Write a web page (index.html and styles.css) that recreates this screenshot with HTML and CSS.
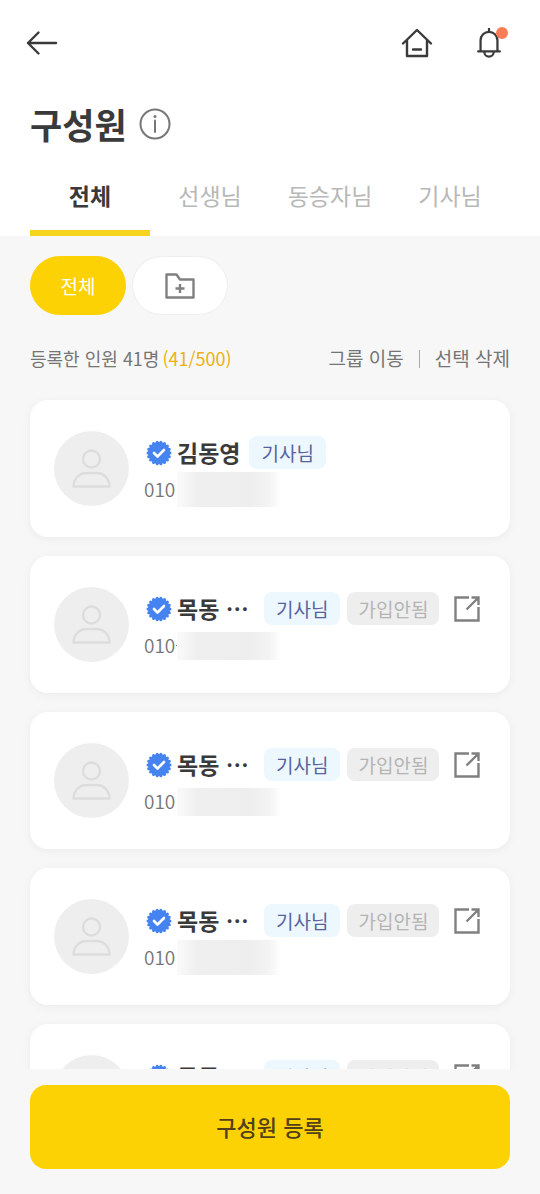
FILE: index.html
```html
<!DOCTYPE html>
<html lang="ko">
<head>
  <meta charset="UTF-8" />
  <meta name="viewport" content="width=device-width, initial-scale=1.0"/>
  <title>구성원</title>
  <link rel="stylesheet" href="styles.css">
</head>
<body>

<!-- Shared icons -->
<svg class="sprite" aria-hidden="true">
  <symbol id="icon-user" viewBox="0 0 75 75">
    <circle cx="37.500" cy="28" r="8.500" />
    <path d="M19.500 55.500c0-8 6-13.500 13-13.500h10c7 0 13 5.500 13 13.500z" />
  </symbol>
  <symbol id="icon-verified" viewBox="0 0 26 26">
    <circle cx="13" cy="13" r="11" fill="#4583f0" />
    <circle cx="13" cy="13" r="11" fill="none" stroke="#4583f0" stroke-width="3" stroke-linecap="round" stroke-dasharray="0 1" pathLength="18" />
    <path d="M8 13l3.500 3.500 6.500-6.500" fill="none" stroke="#fff" stroke-width="2.600" stroke-linecap="round" stroke-linejoin="round" />
  </symbol>
  <symbol id="icon-share" viewBox="0 0 28 28">
    <path d="M16 2.500H2.500v23h23V12M18.500 2.500h7v7.500M25.500 2.500L13.500 14.500" />
  </symbol>
</svg>

<div class="app">
  <header class="header">
    <div class="topbar">
      <button class="icon-btn" aria-label="뒤로">
        <svg width="32" height="26" viewBox="0 0 32 26"><path d="M30 13H2M12.500 2.500L2 13l10.500 10.500" /></svg>
      </button>
      <div class="topbar-right">
        <button class="icon-btn" aria-label="홈">
          <svg width="32" height="30" viewBox="0 0 32 30"><path d="M2 15.500L16 2l14 13.500M6 12v16h20V12M12 21.500h8" /></svg>
        </button>
        <button class="icon-btn bell" aria-label="알림">
          <svg width="26" height="30" viewBox="0 0 26 32"><path d="M13 1v3M4 25V13a9 9 0 0 1 18 0v12M1.500 25h23M8 25.500a5 5 0 0 0 10 0" /></svg>
          <span class="bell-dot"></span>
        </button>
      </div>
    </div>

    <div class="title-row">
      <h1>구성원</h1>
      <button class="icon-btn info" aria-label="안내">
        <svg width="32" height="32" viewBox="0 0 32 32"><circle cx="16" cy="16" r="14.500" /><path d="M16 12.500V24" /><circle class="info-dot" cx="16" cy="8.500" r="1.500" /></svg>
      </button>
    </div>

    <nav class="tabs">
      <button class="tab active">전체</button>
      <button class="tab">선생님</button>
      <button class="tab">동승자님</button>
      <button class="tab">기사님</button>
    </nav>
  </header>

  <main class="content">
    <div class="groups">
      <button class="pill active">전체</button>
      <button class="pill" aria-label="그룹 추가">
        <svg width="30" height="26" viewBox="0 0 30 26"><path d="M1.500 24.500v-23h10l3.500 5h13.500v18zM15 11v9M10.500 15.500h9" /></svg>
      </button>
    </div>

    <div class="summary">
      <p class="count">등록한 인원 41명<span>(41/500)</span></p>
      <div class="actions">
        <button>그룹 이동</button>
        <button>선택 삭제</button>
      </div>
    </div>

    <ul class="members">
      <li class="card">
        <div class="avatar"><svg><use href="#icon-user" /></svg></div>
        <div class="info-col">
          <div class="name-row">
            <svg class="verified"><use href="#icon-verified" /></svg>
            <strong class="name">김동영</strong>
            <span class="badge driver">기사님</span>
          </div>
          <div class="phone"><span class="number">010</span><span class="mask mask-tall"></span></div>
        </div>
      </li>
      <li class="card">
        <div class="avatar"><svg><use href="#icon-user" /></svg></div>
        <div class="info-col">
          <div class="name-row">
            <svg class="verified"><use href="#icon-verified" /></svg>
            <strong class="name cut">목동 …</strong>
            <span class="badge driver">기사님</span>
            <span class="badge pending">가입안됨</span>
            <button class="icon-btn share" aria-label="초대 보내기"><svg><use href="#icon-share" /></svg></button>
          </div>
          <div class="phone"><span class="number">010-</span><span class="mask"></span></div>
        </div>
      </li>
      <li class="card">
        <div class="avatar"><svg><use href="#icon-user" /></svg></div>
        <div class="info-col">
          <div class="name-row">
            <svg class="verified"><use href="#icon-verified" /></svg>
            <strong class="name cut">목동 …</strong>
            <span class="badge driver">기사님</span>
            <span class="badge pending">가입안됨</span>
            <button class="icon-btn share" aria-label="초대 보내기"><svg><use href="#icon-share" /></svg></button>
          </div>
          <div class="phone"><span class="number">010</span><span class="mask"></span></div>
        </div>
      </li>
      <li class="card">
        <div class="avatar"><svg><use href="#icon-user" /></svg></div>
        <div class="info-col">
          <div class="name-row">
            <svg class="verified"><use href="#icon-verified" /></svg>
            <strong class="name cut">목동 …</strong>
            <span class="badge driver">기사님</span>
            <span class="badge pending">가입안됨</span>
            <button class="icon-btn share" aria-label="초대 보내기"><svg><use href="#icon-share" /></svg></button>
          </div>
          <div class="phone"><span class="number">010</span><span class="mask mask-tall"></span></div>
        </div>
      </li>
      <li class="card">
        <div class="avatar"><svg><use href="#icon-user" /></svg></div>
        <div class="info-col">
          <div class="name-row">
            <svg class="verified"><use href="#icon-verified" /></svg>
            <strong class="name cut">목동 …</strong>
            <span class="badge driver">기사님</span>
            <span class="badge pending">가입안됨</span>
            <button class="icon-btn share" aria-label="초대 보내기"><svg><use href="#icon-share" /></svg></button>
          </div>
        </div>
      </li>
    </ul>
  </main>

  <footer class="footer">
    <button class="register">구성원 등록</button>
  </footer>
</div>

</body>
</html>
```
FILE: styles.css
```css
* {
  box-sizing: border-box;
}

body {
  margin: 0;
  background: #f7f7f7;
  color: #3a3a3a;
  font-family: "Noto Sans CJK KR", sans-serif;
}

button {
  padding: 0;
  border: none;
  background: none;
  color: inherit;
  font: inherit;
  cursor: pointer;
}

svg {
  display: block;
}

.sprite {
  display: none;
}

.app {
  display: flex;
  flex-direction: column;
  height: 100vh;
}

/* Header */
.header {
  flex: none;
  background: #fff;
  padding: 0 30px;
}

.topbar {
  display: flex;
  align-items: center;
  justify-content: space-between;
  height: 86px;
  margin: 0 8px 0 -4px;
}

.topbar-right {
  display: flex;
  align-items: center;
  gap: 43px;
}

.icon-btn svg {
  fill: none;
  stroke: #3a3a3a;
  stroke-width: 2.4;
  stroke-linejoin: round;
  stroke-linecap: round;
}

.bell {
  position: relative;
}

.bell-dot {
  position: absolute;
  top: -1px;
  right: -6px;
  width: 12px;
  height: 12px;
  border-radius: 50%;
  background: #fb7d57;
}

.title-row {
  display: flex;
  align-items: center;
  gap: 12px;
  height: 76px;
}

h1 {
  margin: 0;
  font-size: 35px;
  line-height: 48px;
  font-weight: 700;
}

.info svg {
  stroke: #777;
  stroke-width: 2;
}

.info .info-dot {
  fill: #777;
  stroke: none;
}

.tabs {
  display: grid;
  grid-template-columns: repeat(4, 1fr);
}

.tab {
  height: 74px;
  padding-bottom: 2px;
  border-bottom: 6px solid transparent;
  color: #b8b8b8;
  font-size: 23px;
}

.tab.active {
  border-color: #f6d31c;
  color: #3a3a3a;
  font-weight: 700;
}

/* Member list */
.content {
  flex: 1;
  min-height: 0;
  overflow: hidden;
  padding: 20px 30px 0;
}

.groups {
  display: flex;
  gap: 6px;
}

.pill {
  display: flex;
  align-items: center;
  justify-content: center;
  width: 96px;
  height: 59px;
  border: 1px solid #eee;
  border-radius: 30px;
  background: #fff;
  font-size: 19px;
}

.pill.active {
  border-color: #fdd205;
  background: #fdd205;
  color: #fff;
}

.pill svg {
  fill: none;
  stroke: #808080;
  stroke-width: 2.4;
  stroke-linejoin: round;
}

.summary {
  display: flex;
  align-items: center;
  justify-content: space-between;
  height: 85px;
  color: #757575;
}

.count {
  margin: 0;
  font-size: 18px;
}

.count span {
  margin-left: 3px;
  color: #ecb010;
}

.actions {
  display: flex;
  align-items: center;
  font-size: 19px;
  line-height: 28px;
}

.actions button + button::before {
  content: "";
  display: inline-block;
  width: 1px;
  height: 18px;
  margin: 0 15px;
  background: #aaa;
  vertical-align: -2px;
}

.members {
  display: flex;
  flex-direction: column;
  gap: 19px;
  margin: 0;
  padding: 0;
  list-style: none;
}

.card {
  display: flex;
  gap: 15px;
  padding: 31px 24px;
  border-radius: 18px;
  background: #fff;
  box-shadow: 0 2px 10px rgba(0, 0, 0, 0.05);
}

.avatar {
  flex: none;
  width: 75px;
  height: 75px;
  border-radius: 50%;
  background: #eee;
}

.avatar svg {
  width: 75px;
  height: 75px;
  fill: none;
  stroke: #ddd;
  stroke-width: 2.4;
  stroke-linejoin: round;
}

.info-col {
  padding-top: 5px;
}

.name-row {
  display: flex;
  align-items: center;
  height: 33px;
}

.verified {
  width: 26px;
  height: 26px;
  margin: 0 5px 0 2px;
}

.name {
  margin-right: 9px;
  font-size: 23px;
  line-height: 33px;
  white-space: nowrap;
}

.name.cut {
  width: 78px;
}

.badge {
  padding: 0 12px;
  border-radius: 8px;
  font-size: 19px;
  line-height: 33px;
  white-space: nowrap;
}

.badge + .badge {
  margin-left: 7px;
}

.driver {
  background: #edf7fe;
  color: #56639f;
}

.pending {
  padding: 0 11px;
  background: #eee;
  color: #b5b5b5;
}

.share {
  margin-left: 14px;
}

.share svg {
  width: 28px;
  height: 28px;
  stroke: #808080;
  stroke-linecap: butt;
  stroke-linejoin: miter;
}

.phone {
  display: flex;
  align-items: center;
  height: 33px;
  margin-top: 4px;
  color: #757575;
  font-size: 19px;
  font-weight: 350;
}

/* the mask lies over the rest of the number */
.number {
  width: 33px;
  padding-bottom: 3px;
}

.mask {
  width: 104px;
  height: 28px;
  background: linear-gradient(90deg, #fafafa, #efefef 20%, #eee 70%, #f3f3f3 88%, #fff);
}

.mask-tall {
  height: 35px;
}

/* Bottom button */
.footer {
  flex: none;
  padding: 16px 30px 25px;
}

.register {
  width: 100%;
  height: 84px;
  padding-bottom: 2px;
  border-radius: 16px;
  background: #fdd205;
  color: #51401a;
  font-size: 22px;
  font-weight: 500;
}
```
